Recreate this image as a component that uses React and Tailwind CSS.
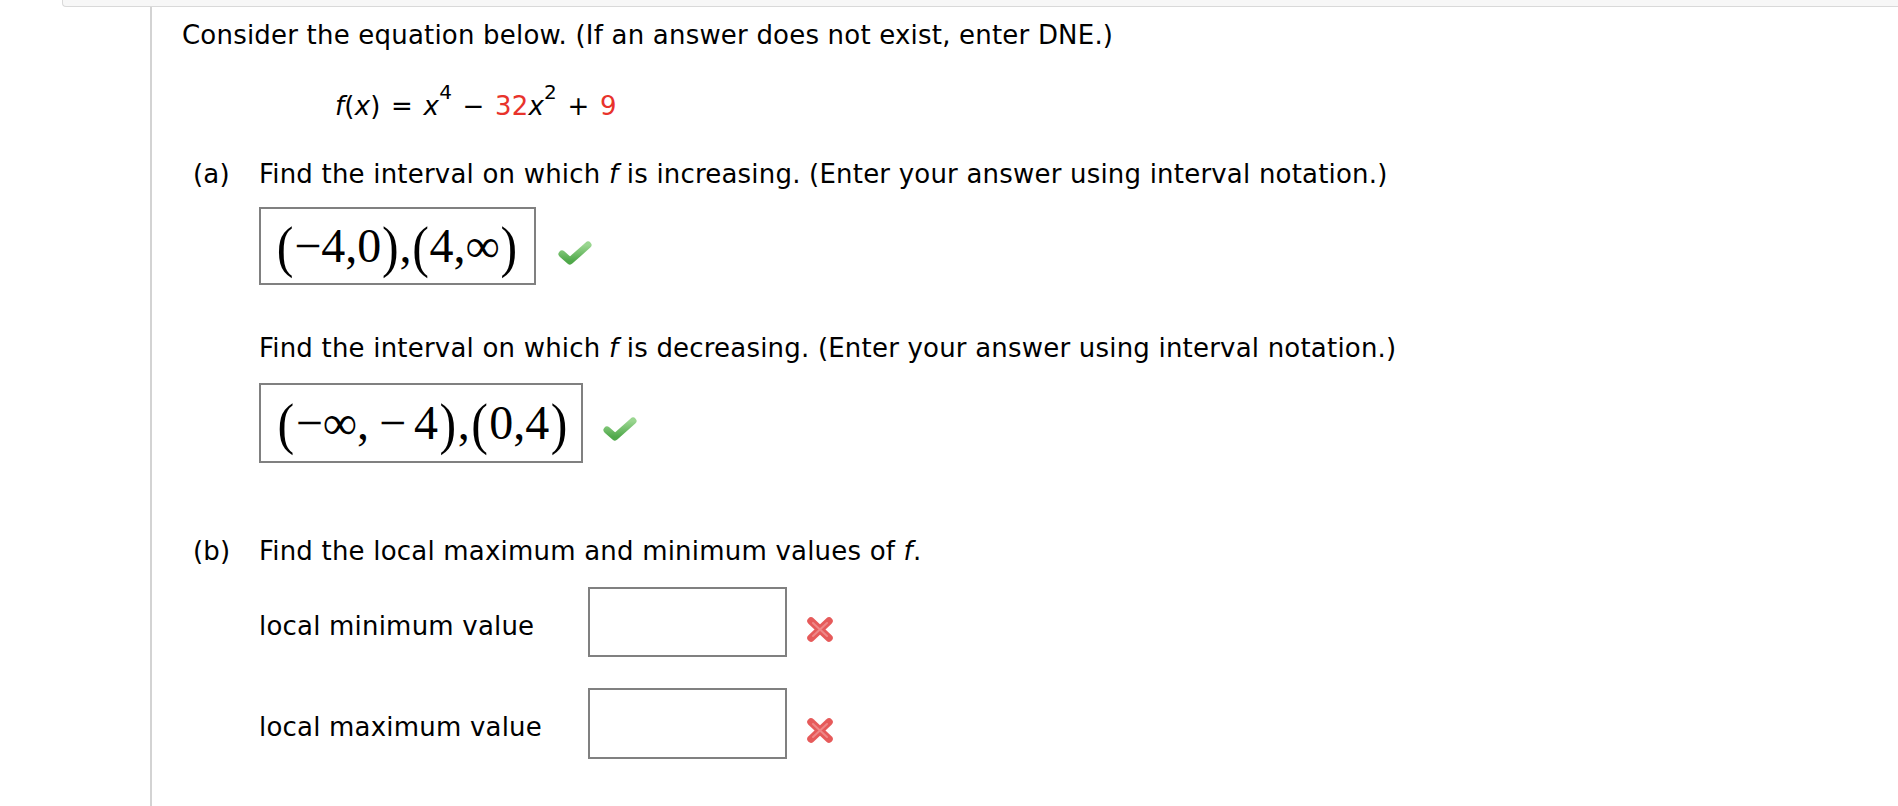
import React from 'react'

const Check = () => (
  <svg width="34" height="26" viewBox="0 0 34 26">
    <defs>
      <linearGradient id="chk" x1="0" y1="0" x2="0" y2="1">
        <stop offset="0" stopColor="#9ad690" />
        <stop offset="1" stopColor="#4fa84a" />
      </linearGradient>
    </defs>
    <path d="M4 14 L12 21 L30 5" fill="none" stroke="url(#chk)" strokeWidth="7" strokeLinecap="round" strokeLinejoin="round" />
  </svg>
)

const Cross = () => (
  <svg width="28" height="27" viewBox="0 0 28 27">
    <g stroke="#e65a5a" strokeWidth="7.5" strokeLinecap="round">
      <path d="M5 5 L23 22" />
      <path d="M23 5 L5 22" />
    </g>
    <g stroke="#f29a9a" strokeWidth="2" strokeLinecap="round" opacity="0.7">
      <path d="M7 7 L21 20" />
      <path d="M21 7 L7 20" />
    </g>
  </svg>
)

// big math-style parenthesis
const P = ({ children, tight }) => (
  <span className={`${tight ? 'mx-[0.75px]' : 'mx-[1.5px]'} inline-block scale-y-[1.15] text-[50px] leading-none`}>{children}</span>
)

const Sup = ({ children }) => (
  <span className="text-[20px] leading-[0px] align-[16px]">{children}</span>
)

const App = () => {
  return (
    <div className="h-[806px] w-full overflow-hidden bg-white font-['DejaVu_Sans',_Verdana,_sans-serif] text-[26px] leading-[30px] tracking-[0.2px] text-black">
      {/* top strip */}
      <div className="ml-[62px] h-[7px] rounded-bl-[4px] border-b border-l border-[#d9d9d9] bg-[#f7f7f7]" />

      <div className="ml-[150px] h-full border-l-2 border-[#d3d3d3] pl-[30px] pt-[13px]">
        <p>Consider the equation below. (If an answer does not exist, enter DNE.)</p>

        {/* equation */}
        <p className="mt-[41px] whitespace-pre pl-[153px] [word-spacing:2px]">
          <i>f</i>(<i>x</i>) = <i>x</i><Sup>4</Sup> − <span className="text-[#e8332b]">32</span><i>x</i><Sup>2</Sup> + <span className="text-[#e8332b]">9</span>
        </p>

        {/* part a */}
        <div className="mt-[38px] flex pl-[11px]">
          <div className="w-[66px] shrink-0">(a)</div>
          <div>
            <p>Find the interval on which <i>f</i> is increasing. (Enter your answer using interval notation.)</p>
            <div className="mt-[18px] flex items-start gap-[22px]">
              <div className="flex h-[78px] w-[277px] items-center border-2 border-[#808080] pl-[15px] font-['Liberation_Serif',_serif] text-[48px] leading-none tracking-normal">
                <P tight>(</P>
                <span>−4,0</span>
                <P tight>)</P>
                <span>,</span>
                <P tight>(</P>
                <span>4,∞</span>
                <P tight>)</P>
              </div>
              <div className="mt-[33px]"><Check /></div>
            </div>

            <p className="mt-[48px]">Find the interval on which <i>f</i> is decreasing. (Enter your answer using interval notation.)</p>
            <div className="mt-[20px] flex items-start gap-[20px]">
              <div className="flex h-[80px] w-[324px] items-center border-2 border-[#808080] pl-[15px] font-['Liberation_Serif',_serif] text-[48px] leading-none tracking-normal">
                <P>(</P>
                <span>−∞,</span>
                <span className="ml-[10px]">−</span>
                <span className="ml-[8px]">4</span>
                <P>)</P>
                <span>,</span>
                <P>(</P>
                <span>0,4</span>
                <P>)</P>
              </div>
              <div className="mt-[33px]"><Check /></div>
            </div>
          </div>
        </div>

        {/* part b */}
        <div className="mt-[73px] flex pl-[11px]">
          <div className="w-[66px] shrink-0">(b)</div>
          <div>
            <p>Find the local maximum and minimum values of <i>f</i>.</p>

            <div className="mt-[21px] flex items-start">
              <div className="mt-[24px] w-[329px] shrink-0">local minimum value</div>
              <div className="h-[70px] w-[199px] border-2 border-[#808080]" />
              <div className="ml-[19px] mt-[29px]"><Cross /></div>
            </div>

            <div className="mt-[31px] flex items-start">
              <div className="mt-[24px] w-[329px] shrink-0">local maximum value</div>
              <div className="h-[71px] w-[199px] border-2 border-[#808080]" />
              <div className="ml-[19px] mt-[29px]"><Cross /></div>
            </div>
          </div>
        </div>
      </div>
    </div>
  )
}

export default App
